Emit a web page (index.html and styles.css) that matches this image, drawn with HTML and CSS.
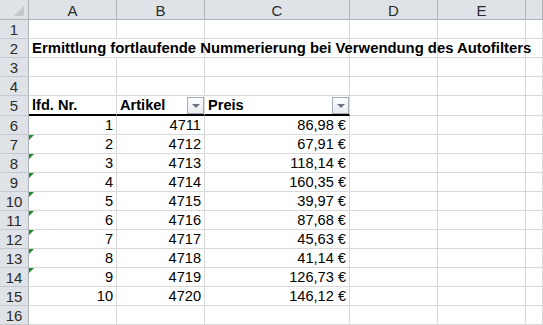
FILE: index.html
```html
<!DOCTYPE html>
<html lang="de">
<head>
    <meta charset="UTF-8">
    <title>Autofilter Nummerierung</title>
    <link rel="stylesheet" href="styles.css">
</head>
<body>
    <div class="sheet">
        <div class="hd corner"><span class="corner-tri"></span></div>
        <div class="hd col">A</div>
        <div class="hd col">B</div>
        <div class="hd col">C</div>
        <div class="hd col">D</div>
        <div class="hd col">E</div>
        <div class="hd col"></div>

        <div class="hd row">1</div>
        <div class="c"></div><div class="c"></div><div class="c"></div><div class="c"></div><div class="c"></div><div class="c"></div>

        <div class="hd row">2</div>
        <div class="c title">Ermittlung fortlaufende Nummerierung bei Verwendung des Autofilters</div><div class="c"></div><div class="c"></div><div class="c"></div><div class="c"></div><div class="c"></div>

        <div class="hd row">3</div>
        <div class="c"></div><div class="c"></div><div class="c"></div><div class="c"></div><div class="c"></div><div class="c"></div>

        <div class="hd row">4</div>
        <div class="c"></div><div class="c"></div><div class="c"></div><div class="c"></div><div class="c"></div><div class="c"></div>

        <div class="hd row">5</div>
        <div class="c head">lfd. Nr.</div>
        <div class="c head">Artikel<span class="filter"></span></div>
        <div class="c head">Preis<span class="filter"></span></div>
        <div class="c"></div><div class="c"></div><div class="c"></div>

        <div class="hd row">6</div>
        <div class="c num">1</div><div class="c num">4711</div><div class="c num">86,98 €</div><div class="c"></div><div class="c"></div><div class="c"></div>

        <div class="hd row">7</div>
        <div class="c num warn">2</div><div class="c num">4712</div><div class="c num">67,91 €</div><div class="c"></div><div class="c"></div><div class="c"></div>

        <div class="hd row">8</div>
        <div class="c num warn">3</div><div class="c num">4713</div><div class="c num">118,14 €</div><div class="c"></div><div class="c"></div><div class="c"></div>

        <div class="hd row">9</div>
        <div class="c num warn">4</div><div class="c num">4714</div><div class="c num">160,35 €</div><div class="c"></div><div class="c"></div><div class="c"></div>

        <div class="hd row">10</div>
        <div class="c num warn">5</div><div class="c num">4715</div><div class="c num">39,97 €</div><div class="c"></div><div class="c"></div><div class="c"></div>

        <div class="hd row">11</div>
        <div class="c num warn">6</div><div class="c num">4716</div><div class="c num">87,68 €</div><div class="c"></div><div class="c"></div><div class="c"></div>

        <div class="hd row">12</div>
        <div class="c num warn">7</div><div class="c num">4717</div><div class="c num">45,63 €</div><div class="c"></div><div class="c"></div><div class="c"></div>

        <div class="hd row">13</div>
        <div class="c num warn">8</div><div class="c num">4718</div><div class="c num">41,14 €</div><div class="c"></div><div class="c"></div><div class="c"></div>

        <div class="hd row">14</div>
        <div class="c num warn">9</div><div class="c num">4719</div><div class="c num">126,73 €</div><div class="c"></div><div class="c"></div><div class="c"></div>

        <div class="hd row">15</div>
        <div class="c num">10</div><div class="c num">4720</div><div class="c num">146,12 €</div><div class="c"></div><div class="c"></div><div class="c"></div>

        <div class="hd row">16</div>
        <div class="c"></div><div class="c"></div><div class="c"></div><div class="c"></div><div class="c"></div><div class="c"></div>
    </div>
</body>
</html>
```

FILE: styles.css
```css
body {
    margin: 0;
    background: #fff;
    font-family: Arial, "Liberation Sans", sans-serif;
    font-size: 14.6px;
    color: #000;
    overflow: hidden;
}

.sheet {
    display: grid;
    grid-template-columns: 29px 88px 88px 145px 88px 88px 1fr;
    grid-template-rows: 20px repeat(4, 19px) 20px repeat(11, 19px);
    width: 543px;
}

.hd {
    background-color: #dfe3e8;
    color: #2b2b2b;
    border-right: 1px solid #aeb3ba;
    border-bottom: 1px solid #aeb3ba;
    display: flex;
    align-items: center;
    justify-content: center;
    box-sizing: border-box;
}

.hd.col {
    font-size: 15px;
    padding-top: 1px;
}

.hd.row {
    font-size: 15px;
    border-bottom-color: #c5cad1;
}

.corner {
    position: relative;
}

.corner-tri {
    position: absolute;
    right: 4px;
    bottom: 3px;
    width: 0;
    height: 0;
    border-left: 10px solid transparent;
    border-bottom: 10px solid #c4c8ce;
}

.c {
    position: relative;
    border-right: 1px solid #d9d9d9;
    border-bottom: 1px solid #d9d9d9;
    box-sizing: border-box;
    padding: 0 3px;
    white-space: nowrap;
    line-height: 19px;
}

.title {
    font-weight: bold;
    font-size: 14.85px;
    overflow: visible;
    z-index: 1;
    border-right-color: transparent;
}

.head {
    font-weight: bold;
    border-bottom: 2px solid #000;
    line-height: 19px;
}

.num {
    text-align: right;
}

.warn::before {
    content: "";
    position: absolute;
    left: 0;
    top: 0;
    border-top: 5px solid #1f8a2e;
    border-right: 5px solid transparent;
}

.filter {
    position: absolute;
    right: 0;
    top: 1px;
    width: 17px;
    height: 17px;
    box-sizing: border-box;
    border: 1px solid #a5acb5;
    background: linear-gradient(#fbfcfd, #e9ecf0);
}

.filter::after {
    content: "";
    position: absolute;
    left: 4px;
    top: 6px;
    border-left: 4px solid transparent;
    border-right: 4px solid transparent;
    border-top: 4px solid #6b7280;
}
```
